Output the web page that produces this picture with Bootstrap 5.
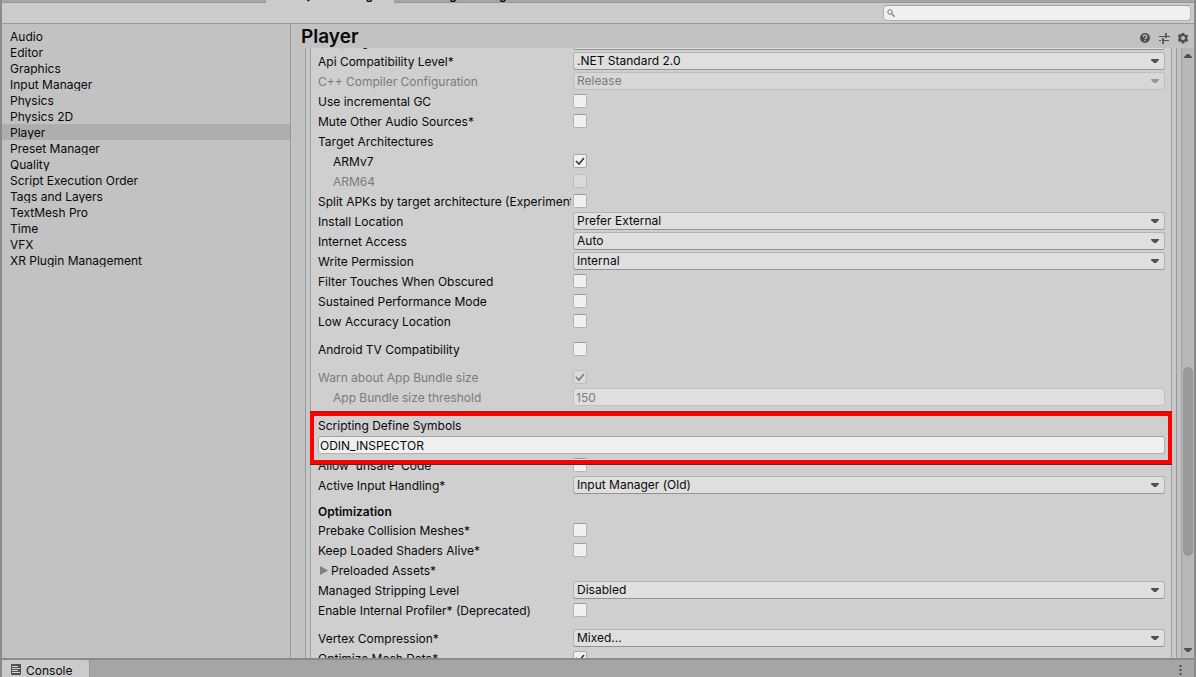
<!DOCTYPE html>
<html lang="en">
<head>
<meta charset="utf-8">
<meta name="viewport" content="width=device-width, initial-scale=1">
<title>Project Settings</title>
<link href="https://cdn.jsdelivr.net/npm/bootstrap@5.3.0/dist/css/bootstrap.min.css" rel="stylesheet">
<style>
  body { font: 12px/18px Inter, "Liberation Sans", sans-serif; color: #090909; background: #c2c2c2; }
  .editor { border: solid #8a8a8a; border-width: 0 2px; }
  .dock-tabs { height: 3px; background: linear-gradient(#a5a5a5 2px, #999 2px); padding-left: 264px; }
  .dock-tab { height: 3px; line-height: 18px; font-weight: 600; color: #090909; display: flex; align-items: flex-end; overflow: hidden; flex: none; width: 128px; padding-left: 20px; }
  .dock-tab.active { background: #cbcbcb; padding-left: 22px; }
  .dock-tab span { height: 17px; flex: none; }
  .toolbar { height: 21px; background: #cbcbcb; border-bottom: 1px solid #999; padding-right: 3px; }
  .search { position: relative; width: 308px; }
  .search .form-control { height: 16px; min-height: 0; padding: 0 4px 0 18px; border-radius: 4px; border-color: #b2b2b2; border-top-color: #a0a0a0; background: #f0f0f0; font-size: 12px; line-height: 14px; }
  .search svg { position: absolute; left: 4px; top: 4px; }
  .sidebar { width: 289px; border-right: 1px solid #999; padding-top: 4px; }
  .sidebar li { height: 16px; }
  .sidebar li.current { background: #aeaeae; }
  .sidebar a { display: block; height: 15px; overflow: hidden; padding-left: 8px; color: inherit; text-decoration: none; }
  .titlebar { height: 24px; padding: 0 4px 0 10px; }
  .titlebar h1 { font-size: 19px; line-height: 26px; font-weight: 600; }
  .tools { gap: 6px; padding-top: 4px; }
  .tool { border: 0; background: none; padding: 0; width: 13px; height: 14px; display: flex; align-items: center; justify-content: center; color: #505050; }
  .frame { margin: 0 4px 0 14px; border: solid #999; border-width: 0 1px; padding: 0 4px; background: #c8c8c8; }
  .panel { border: solid #a0a0a0; border-width: 0 1px; padding: 0 6px 0 7px; background: #cfcfcf; }
  .fields { margin-top: -16px; }
  .field { display: grid; grid-template: 18px / 253px minmax(0, 1fr); column-gap: 2px; align-items: center; height: 18px; margin-bottom: 2px; }
  .field > label, .field > .title { overflow: hidden; white-space: nowrap; line-height: 20px; height: 18px; }
  .field.inset > label { padding-left: 15px; }
  .field.off > label { color: #7b7b7b; }
  .spaced { margin-top: 10px; }
  .field .form-select, .field .form-control, .symbols .form-control { height: 18px; min-height: 0; font-size: 12px; line-height: 16px; border: 1px solid #b2b2b2; border-radius: 3px; color: #090909; }
  .field .form-select { padding: 0 20px 0 3px; border-bottom-color: #939393; background: #dfdfdf url("data:image/svg+xml,%3Csvg xmlns='http://www.w3.org/2000/svg' viewBox='0 0 8 5'%3E%3Cpath d='M0 0h8v1L5 4H3L0 1z' fill='%23505050'/%3E%3C/svg%3E") no-repeat right 5px center / 8px 5px; }
  .field .form-select:disabled { color: #7b7b7b; opacity: 1; border-color: #bdbdbd; background-color: #d7d7d7; background-image: url("data:image/svg+xml,%3Csvg xmlns='http://www.w3.org/2000/svg' viewBox='0 0 8 5'%3E%3Cpath d='M0 0h8v1L5 4H3L0 1z' fill='%23969696'/%3E%3C/svg%3E"); }
  .field .form-control, .symbols .form-control { padding: 0 2px; background: #f0f0f0; border-top-color: #a0a0a0; }
  .symbols .form-control { padding-left: 1px; }
  .field .form-control:disabled { color: #7b7b7b; background: #dfdfdf; border-color: #c0c0c0; }
  .field .form-check-input { width: 14px; height: 14px; margin: 0; border: 1px solid #b4b4b4; border-top-color: #9a9a9a; border-radius: 2px; background-color: #f0f0f0; background-size: 12px 12px; }
  .field .form-check-input:checked { background-color: #f0f0f0; border-color: #a8a8a8; background-image: url("data:image/svg+xml,%3Csvg xmlns='http://www.w3.org/2000/svg' viewBox='0 0 12 12'%3E%3Cpath d='M2 6l3 3 5-6' fill='none' stroke='%23383838' stroke-width='1.6'/%3E%3C/svg%3E"); }
  .field .form-check-input:disabled { opacity: 1; background-color: #dadada; border-color: #bdbdbd; }
  .field .form-check-input:disabled:checked { background-image: url("data:image/svg+xml,%3Csvg xmlns='http://www.w3.org/2000/svg' viewBox='0 0 12 12'%3E%3Cpath d='M2 6l3 3 5-6' fill='none' stroke='%23777' stroke-width='1.6'/%3E%3C/svg%3E"); }
  .symbols { position: relative; margin: 10px 0 2px; }
  .symbols label { display: block; height: 20px; line-height: 20px; }
  .symbols::after { content: ""; position: absolute; inset: -4px -7px -10px -8px; border: 4px solid #f00; box-shadow: 0 -1px #922, 0 1px #622; pointer-events: none; }
  .section-title { font-size: 12px; font-weight: 600; line-height: 19px; height: 17px; margin: 8px 0 2px; }
  .foldout { border: 0; background: none; padding: 2px 0 0 2px; color: inherit; height: 20px; text-align: left; display: flex; align-items: center; gap: 3px; }
  .scroller { width: 13px; background: #b8b8b8; border-left: 1px solid #a3a3a3; }
  .scroller .arrow { height: 15px; border: 0; padding: 0; background: none; color: #505050; display: flex; align-items: center; justify-content: center; width: 100%; }
  .thumb { flex: 189 0 0; width: 10px; border-radius: 5px; background: #999; margin-left: 1px; }
  .gap-above { flex: 304 0 0; }
  .gap-below { flex: 87 0 0; }
  .console-bar { height: 19px; background: #a5a5a5; border-top: 2px solid #8a8a8a; padding-right: 7px; }
  .console-tab { width: 88px; height: 17px; border: 0; border-right: 1px solid #999; border-radius: 0 3px 0 0; background: #cbcbcb; color: inherit; padding: 0 0 0 9px; display: flex; gap: 5px; line-height: 22px; overflow: hidden; }
  .console-tab svg { margin-top: 4px; }
  .console-bar .tool { height: 19px; }
</style>
</head>
<body>
<div class="editor vh-100 d-flex flex-column overflow-hidden">
  <nav class="dock-tabs d-flex flex-shrink-0 overflow-hidden">
    <a href="#" class="dock-tab active text-decoration-none"><span>Project Settings</span></a>
    <a href="#" class="dock-tab text-decoration-none"><span>Package Manager</span></a>
  </nav>
  <div class="toolbar d-flex justify-content-end align-items-center flex-shrink-0">
    <div class="search">
      <input type="search" class="form-control" aria-label="Search settings">
      <svg width="9" height="9" viewBox="0 0 9 9" fill="none" stroke="#777"><circle cx="3" cy="3" r="2.200"/><path d="M4.700 4.700l3 3" stroke-width="1.300"/></svg>
    </div>
  </div>

  <main class="d-flex flex-fill overflow-hidden">
    <nav class="sidebar flex-shrink-0">
      <ul class="list-unstyled mb-0">
        <li><a href="#">Audio</a></li>
        <li><a href="#">Editor</a></li>
        <li><a href="#">Graphics</a></li>
        <li><a href="#">Input Manager</a></li>
        <li><a href="#">Physics</a></li>
        <li><a href="#">Physics 2D</a></li>
        <li class="current"><a href="#" aria-current="page">Player</a></li>
        <li><a href="#">Preset Manager</a></li>
        <li><a href="#">Quality</a></li>
        <li><a href="#">Script Execution Order</a></li>
        <li><a href="#">Tags and Layers</a></li>
        <li><a href="#">TextMesh Pro</a></li>
        <li><a href="#">Time</a></li>
        <li><a href="#">VFX</a></li>
        <li><a href="#">XR Plugin Management</a></li>
      </ul>
    </nav>

    <section class="d-flex flex-column flex-fill overflow-hidden">
      <header class="titlebar d-flex flex-shrink-0 justify-content-between">
        <h1 class="mb-0">Player</h1>
        <div class="tools d-flex align-items-center">
          <button class="tool" aria-label="Help"><svg width="11" height="11" viewBox="0 0 11 11"><circle cx="5" cy="5" r="5" fill="currentColor"/><path d="M3.300 3.900c0-2.300 3.500-2.200 3.500-.1 0 1.200-1.700 1.200-1.700 2.500M5.100 7.100v1.200" fill="none" stroke="#c8c8c8" stroke-width="1.200"/></svg></button>
          <button class="tool" aria-label="Presets"><svg width="11" height="11" viewBox="0 0 11 11" fill="none" stroke="currentColor"><path d="M0 3.500h7M8 3.500h3M0 7.500h2M4 7.500h6" stroke-width="1.200"/><path d="M7 0v5M4 5v6" stroke-width="1.700"/></svg></button>
          <button class="tool" aria-label="Options"><svg width="11" height="11" viewBox="0 0 11 11"><path transform="translate(-.5 -.5)" fill="currentColor" fill-rule="evenodd" d="M4.300 .5h2.400l.4 1.500 1 .6 1.400-.5L10.800 3.600 9.700 4.800v1.400l1.100 1.200-1.300 2-1.400-.5-1 .6L6.700 11H4.300l-.4-1.500-1-.6-1.400.5-1.300-2 1.100-1.200V4.800L.2 3.600l1.300-2 1.400.5 1-.6zM5.500 3.500a2 2 0 100 4 2 2 0 000-4z"/></svg></button>
        </div>
      </header>

      <div class="d-flex flex-fill overflow-hidden">
        <div class="frame flex-fill d-flex overflow-hidden">
          <div class="panel flex-fill">
            <form class="fields">
              <div class="field"><label for="backend">Scripting Backend</label><select id="backend" class="form-select"><option>Mono</option></select></div>
              <div class="field"><label for="api">Api Compatibility Level*</label><select id="api" class="form-select"><option>.NET Standard 2.0</option></select></div>
              <div class="field off"><label for="cpp">C++ Compiler Configuration</label><select id="cpp" class="form-select" disabled><option>Release</option></select></div>
              <div class="field"><label for="gc">Use incremental GC</label><input id="gc" type="checkbox" class="form-check-input"></div>
              <div class="field"><label for="mute">Mute Other Audio Sources*</label><input id="mute" type="checkbox" class="form-check-input"></div>
              <div class="field"><span class="title">Target Architectures</span></div>
              <div class="field inset"><label for="armv7">ARMv7</label><input id="armv7" type="checkbox" class="form-check-input" checked></div>
              <div class="field inset off"><label for="arm64">ARM64</label><input id="arm64" type="checkbox" class="form-check-input" disabled></div>
              <div class="field"><label for="split">Split APKs by target architecture (Experimental)</label><input id="split" type="checkbox" class="form-check-input"></div>
              <div class="field"><label for="install">Install Location</label><select id="install" class="form-select"><option>Prefer External</option></select></div>
              <div class="field"><label for="internet">Internet Access</label><select id="internet" class="form-select"><option>Auto</option></select></div>
              <div class="field"><label for="write">Write Permission</label><select id="write" class="form-select"><option>Internal</option></select></div>
              <div class="field"><label for="touches">Filter Touches When Obscured</label><input id="touches" type="checkbox" class="form-check-input"></div>
              <div class="field"><label for="sustained">Sustained Performance Mode</label><input id="sustained" type="checkbox" class="form-check-input"></div>
              <div class="field"><label for="accuracy">Low Accuracy Location</label><input id="accuracy" type="checkbox" class="form-check-input"></div>
              <div class="field spaced"><label for="tv">Android TV Compatibility</label><input id="tv" type="checkbox" class="form-check-input"></div>
              <div class="field spaced off"><label for="warn">Warn about App Bundle size</label><input id="warn" type="checkbox" class="form-check-input" checked disabled></div>
              <div class="field inset off"><label for="threshold">App Bundle size threshold</label><input id="threshold" type="text" class="form-control" value="150" disabled></div>
              <div class="symbols"><label for="symbols">Scripting Define Symbols</label><input id="symbols" type="text" class="form-control" value="ODIN_INSPECTOR"></div>
              <div class="field"><label for="unsafe">Allow 'unsafe' Code</label><input id="unsafe" type="checkbox" class="form-check-input"></div>
              <div class="field"><label for="input">Active Input Handling*</label><select id="input" class="form-select"><option>Input Manager (Old)</option></select></div>
              <h2 class="section-title">Optimization</h2>
              <div class="field"><label for="prebake">Prebake Collision Meshes*</label><input id="prebake" type="checkbox" class="form-check-input"></div>
              <div class="field"><label for="shaders">Keep Loaded Shaders Alive*</label><input id="shaders" type="checkbox" class="form-check-input"></div>
              <div class="field"><button type="button" class="foldout" aria-expanded="false"><svg width="8" height="10" viewBox="0 0 8 10"><path d="M0 0l8 4.500L0 9z" fill="#7f7f7f"/></svg>Preloaded Assets*</button></div>
              <div class="field"><label for="stripping">Managed Stripping Level</label><select id="stripping" class="form-select"><option>Disabled</option></select></div>
              <div class="field"><label for="profiler">Enable Internal Profiler* (Deprecated)</label><input id="profiler" type="checkbox" class="form-check-input"></div>
              <div class="field spaced"><label for="vertex">Vertex Compression*</label><select id="vertex" class="form-select"><option>Mixed...</option></select></div>
              <div class="field"><label for="mesh">Optimize Mesh Data*</label><input id="mesh" type="checkbox" class="form-check-input" checked></div>
            </form>
          </div>
        </div>
        <div class="scroller d-flex flex-column flex-shrink-0">
          <button class="arrow" aria-label="Scroll up"><svg width="8" height="5" viewBox="0 0 8 5"><path d="M0 5V4l3-3h2l3 3v1z" fill="currentColor"/></svg></button>
          <div class="gap-above"></div>
          <div class="thumb"></div>
          <div class="gap-below"></div>
          <button class="arrow" aria-label="Scroll down"><svg width="8" height="5" viewBox="0 0 8 5"><path d="M0 0h8v1L5 4H3L0 1z" fill="currentColor"/></svg></button>
        </div>
      </div>
    </section>
  </main>

  <footer class="console-bar d-flex justify-content-between flex-shrink-0">
    <button class="console-tab"><svg width="10" height="11" viewBox="0 0 10 11"><rect width="10" height="11" rx="1" fill="#505050"/><path d="M1 2.500h6M1 4.500h8M1 6.500h6M1 8.500h8" stroke="#d5d5d5"/></svg>Console</button>
    <button class="tool" aria-label="Console menu"><svg width="3" height="11" viewBox="0 0 3 11" fill="#505050"><path d="M.5 1h2v2h-2zM.5 5h2v2h-2zM.5 9h2v2h-2z"/></svg></button>
  </footer>
</div>
<script src="https://cdn.jsdelivr.net/npm/bootstrap@5.3.0/dist/js/bootstrap.bundle.min.js"></script>
</body>
</html>
